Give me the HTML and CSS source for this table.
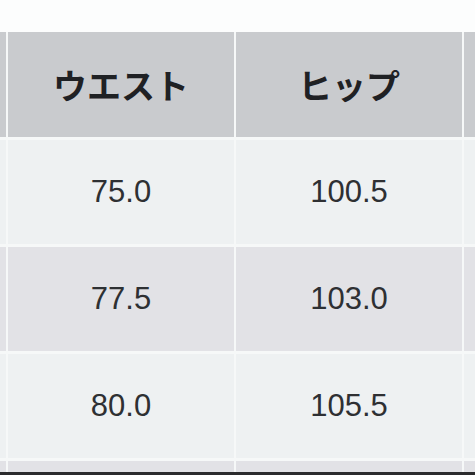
FILE: index.html
```html
<!DOCTYPE html>
<html lang="ja">
<head>
<meta charset="utf-8">
<link rel="stylesheet" href="styles.css">
</head>
<body>
<div class="page">
  <div class="grid">
    <div class="cell head"></div>
    <div class="cell head">ウエスト</div>
    <div class="cell head">ヒップ</div>
    <div class="cell head"></div>

    <div class="cell odd"></div>
    <div class="cell odd num">75.0</div>
    <div class="cell odd num">100.5</div>
    <div class="cell odd"></div>

    <div class="cell even"></div>
    <div class="cell even num">77.5</div>
    <div class="cell even num">103.0</div>
    <div class="cell even"></div>

    <div class="cell odd"></div>
    <div class="cell odd num">80.0</div>
    <div class="cell odd num">105.5</div>
    <div class="cell odd"></div>

    <div class="cell even"></div>
    <div class="cell even"></div>
    <div class="cell even"></div>
    <div class="cell even"></div>
  </div>
  <div class="edge"></div>
</div>
</body>
</html>
```

FILE: styles.css
```css
html, body {
  margin: 0;
  padding: 0;
  background: #fcfdfd;
}
.page {
  width: 475px;
  height: 475px;
  display: flex;
  flex-direction: column;
  padding-top: 32px;
  box-sizing: border-box;
  overflow: hidden;
}
.grid {
  display: grid;
  grid-template-columns: 6px 226px 226px 1fr;
  grid-template-rows: 105px 104px 104px 104px 1fr;
  column-gap: 2px;
  row-gap: 3px;
  flex: 1;
  background: #f6f8f8;
}
.cell {
  display: flex;
  align-items: center;
  justify-content: center;
}
.head {
  background: #c9cbce;
  color: #1f2124;
  font-family: "Noto Sans CJK JP", sans-serif;
  font-weight: 700;
  font-size: 34px;
  letter-spacing: 0;
}
.odd {
  background: #eef1f2;
}
.even {
  background: #e2e2e6;
}
.num {
  font-family: "Liberation Sans", Arial, sans-serif;
  font-size: 31px;
  color: #2e3033;
}
.edge {
  height: 3px;
  background: #2b2b2d;
}
```
